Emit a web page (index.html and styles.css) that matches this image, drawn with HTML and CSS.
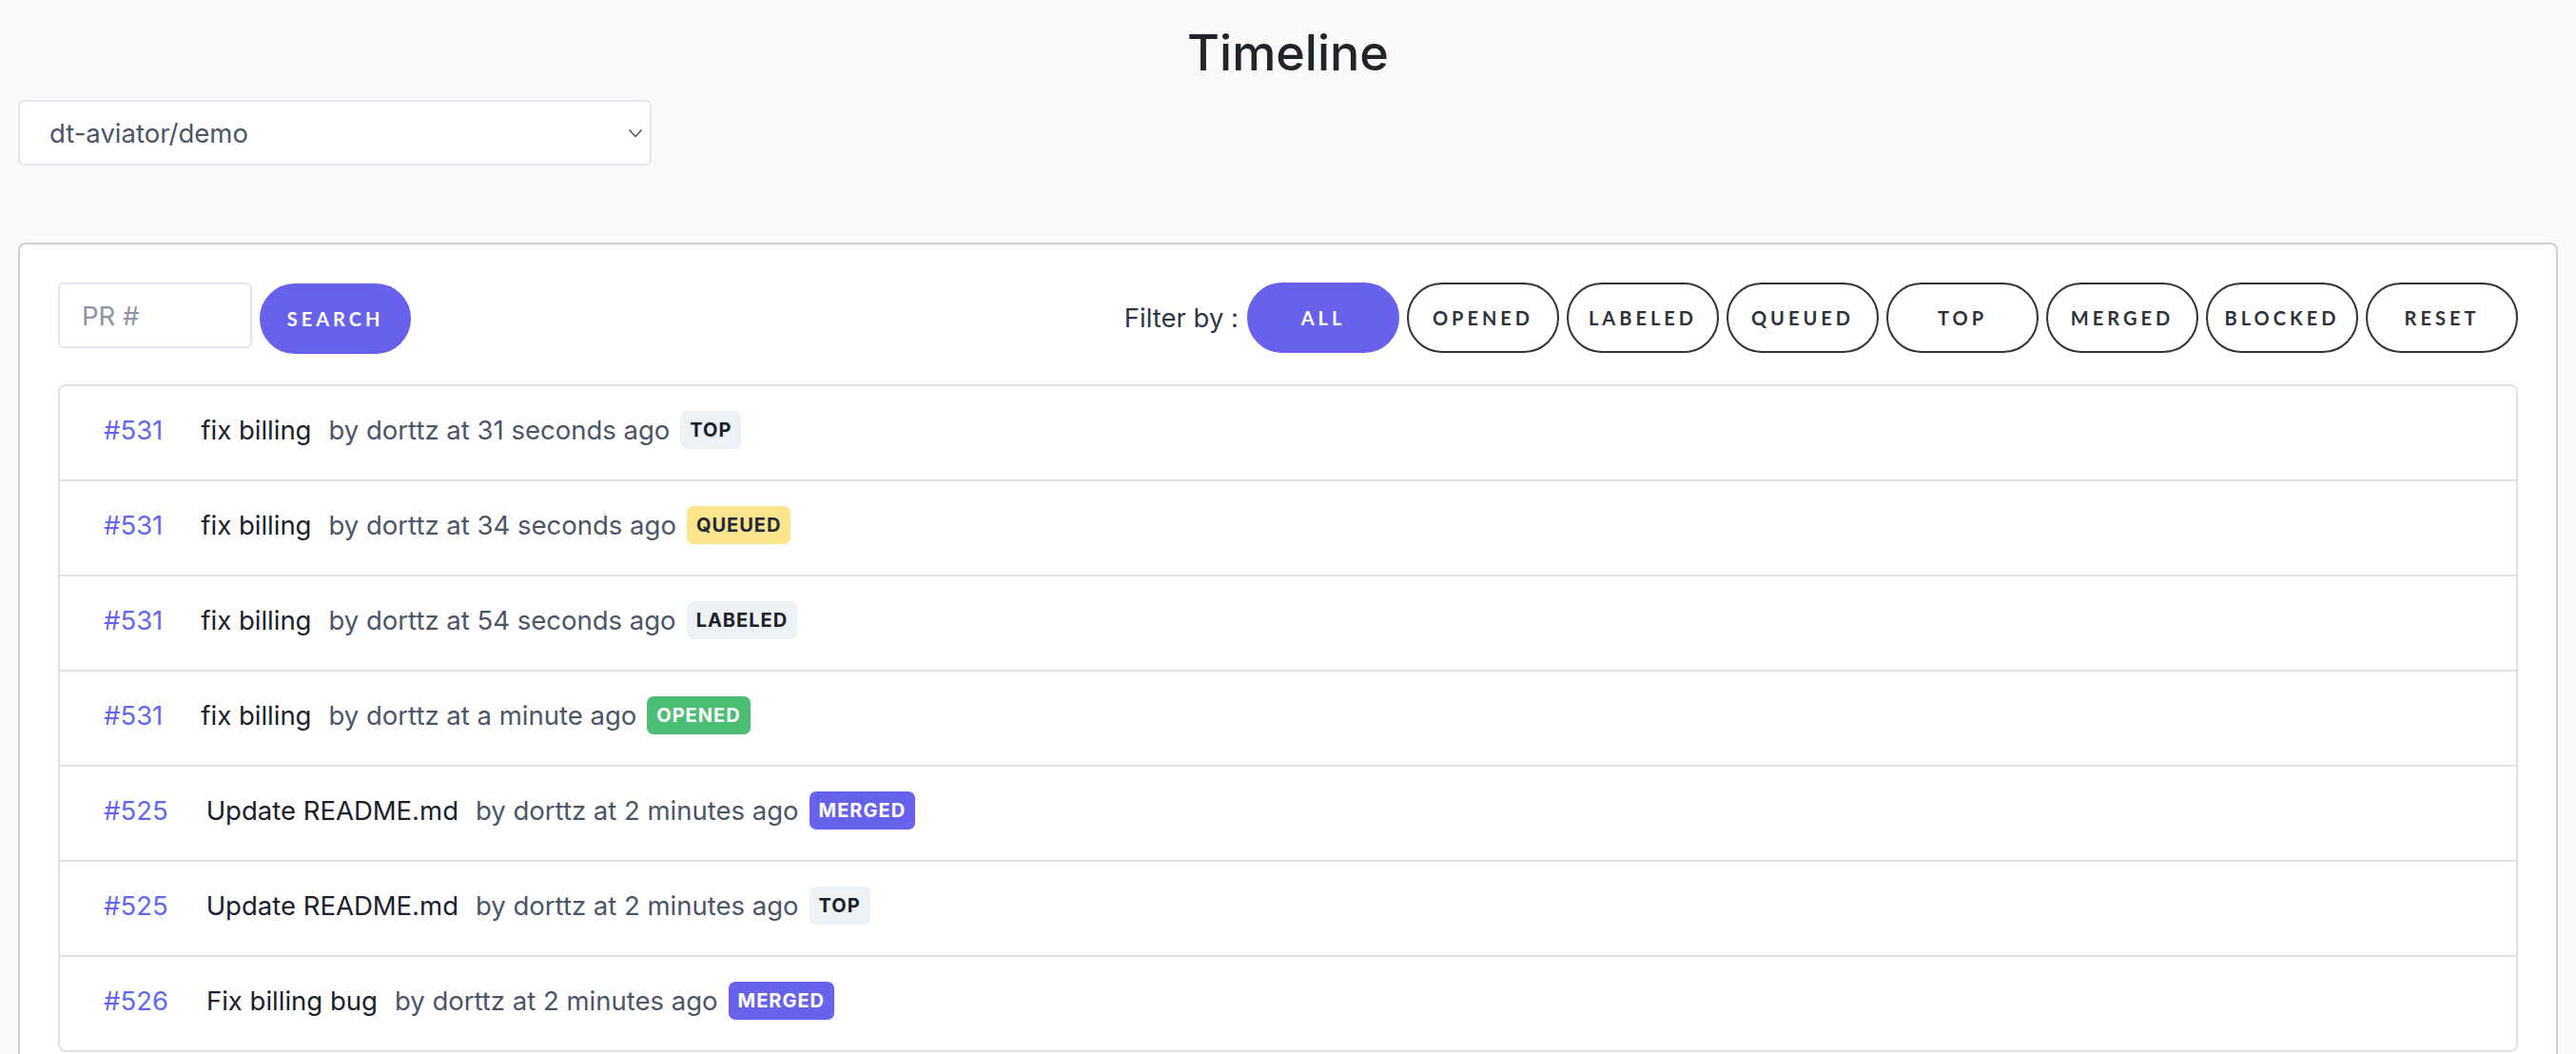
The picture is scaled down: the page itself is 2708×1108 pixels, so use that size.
FILE: index.html
```html
<!DOCTYPE html>
<html lang="en">
<head>
<meta charset="utf-8">
<title>Timeline</title>
<link rel="stylesheet" href="styles.css">
</head>
<body>
<h1 class="page-title">Timeline</h1>
<div class="repo-select-wrap">
  <select class="repo-select">
    <option>dt-aviator/demo</option>
  </select>
  <svg class="chevron" width="16" height="10" viewBox="0 0 16 10"><path d="M1.5 1.5 L8 8.5 L14.5 1.5" fill="none" stroke="#4a5568" stroke-width="1.5"/></svg>
</div>

<section class="card">
  <div class="toolbar">
    <div class="search">
      <input class="pr-input" type="text" placeholder="PR #">
      <button class="btn btn-primary search-btn">Search</button>
    </div>
    <div class="filters">
      <span class="filter-label">Filter by :</span>
      <button class="btn btn-pill btn-active">All</button>
      <button class="btn btn-pill">Opened</button>
      <button class="btn btn-pill">Labeled</button>
      <button class="btn btn-pill">Queued</button>
      <button class="btn btn-pill">Top</button>
      <button class="btn btn-pill">Merged</button>
      <button class="btn btn-pill">Blocked</button>
      <button class="btn btn-pill">Reset</button>
    </div>
  </div>

  <ul class="events">
    <li class="event"><a class="pr-num">#531</a><span class="pr-title">fix billing</span><span class="meta">by dorttz at 31 seconds ago</span><span class="badge badge-gray">Top</span></li>
    <li class="event"><a class="pr-num">#531</a><span class="pr-title">fix billing</span><span class="meta">by dorttz at 34 seconds ago</span><span class="badge badge-yellow">Queued</span></li>
    <li class="event"><a class="pr-num">#531</a><span class="pr-title">fix billing</span><span class="meta">by dorttz at 54 seconds ago</span><span class="badge badge-gray">Labeled</span></li>
    <li class="event"><a class="pr-num">#531</a><span class="pr-title">fix billing</span><span class="meta">by dorttz at a minute ago</span><span class="badge badge-green">Opened</span></li>
    <li class="event"><a class="pr-num">#525</a><span class="pr-title">Update README.md</span><span class="meta">by dorttz at 2 minutes ago</span><span class="badge badge-indigo">Merged</span></li>
    <li class="event"><a class="pr-num">#525</a><span class="pr-title">Update README.md</span><span class="meta">by dorttz at 2 minutes ago</span><span class="badge badge-gray">Top</span></li>
    <li class="event"><a class="pr-num">#526</a><span class="pr-title">Fix billing bug</span><span class="meta">by dorttz at 2 minutes ago</span><span class="badge badge-indigo">Merged</span></li>
  </ul>
</section>
</body>
</html>
```

FILE: styles.css
```css
* { box-sizing: border-box; }

body {
  margin: 0;
  padding: 0 19px;
  background: #fafafa;
  font-family: Inter, "Noto Sans", sans-serif;
  color: #1a202c;
}

.page-title {
  margin: 24px 0 0;
  text-align: center;
  font-size: 52px;
  line-height: 64px;
  font-weight: 500;
  color: #212529;
}

.repo-select-wrap {
  position: relative;
  width: 666px;
  margin-top: 17px;
}

.repo-select {
  appearance: none;
  -webkit-appearance: none;
  display: block;
  width: 666px;
  height: 69px;
  padding: 0 40px 0 31px;
  border: 2px solid #e2e8f0;
  border-radius: 6px;
  background: #fff;
  font-family: Inter, "Noto Sans", sans-serif;
  font-size: 27.5px;
  color: #4a5568;
}

.chevron {
  position: absolute;
  right: 9px;
  top: 30px;
}

.card {
  margin-top: 81px;
  background: #fff;
  border: 2px solid #cbd0d8;
  border-radius: 8px;
  padding: 40px;
}

.toolbar {
  display: flex;
  justify-content: space-between;
  align-items: flex-start;
}

.search {
  display: flex;
  align-items: flex-start;
  gap: 8px;
}

.pr-input {
  width: 204px;
  height: 69px;
  border: 2px solid #e2e8f0;
  border-radius: 6px;
  padding: 0 23px;
  font-family: Inter, "Noto Sans", sans-serif;
  font-size: 27.5px;
  color: #4a5568;
  background: #fff;
}
.pr-input::placeholder { color: #8a94a3; }

.btn {
  height: 74px;
  border-radius: 37px;
  font-family: Lato, "Noto Sans", sans-serif;
  font-weight: 700;
  font-size: 20px;
  letter-spacing: 0.2em;
  text-transform: uppercase;
  cursor: pointer;
  padding: 0;
}

.btn-primary {
  background: #6761ec;
  border: 2px solid #6761ec;
  color: #fff;
}

.search-btn {
  width: 159px;
  margin-top: 1px;
}

.filters {
  display: flex;
  align-items: center;
  gap: 8px;
}

.filter-label {
  font-size: 27.5px;
  color: #2d3748;
  margin-right: 1px;
}

.btn-pill {
  width: 160px;
  background: #fff;
  border: 2px solid #2d3339;
  color: #2d3339;
}

.btn-pill.btn-active {
  background: #6761ec;
  border-color: #6761ec;
  color: #fff;
}

.events {
  list-style: none;
  margin: 32px 0 0;
  padding: 0;
  border: 2px solid #e2e2e2;
  border-radius: 8px;
}

.event {
  display: flex;
  align-items: center;
  height: 100px;
  padding-left: 46px;
  padding-bottom: 6px;
  border-bottom: 2px solid #e2e2e2;
  font-size: 27.5px;
}

.event:last-child { border-bottom: 0; height: 98px; }

.pr-num {
  color: #6366f1;
  margin-right: 40px;
}

.pr-title {
  color: #1a202c;
  margin-right: 18px;
}

.meta {
  color: #4a5568;
  margin-right: 11px;
}

.badge {
  display: inline-block;
  height: 40px;
  line-height: 40px;
  padding: 0 10px;
  border-radius: 7px;
  font-weight: 700;
  font-size: 20px;
  letter-spacing: 0.05em;
  text-transform: uppercase;
}

.badge-gray { background: #edf2f7; color: #1a202c; }
.badge-yellow { background: #fde58d; color: #1f2937; }
.badge-green { background: #4bbd74; color: #fff; }
.badge-indigo { background: #6761ec; color: #fff; }
```
